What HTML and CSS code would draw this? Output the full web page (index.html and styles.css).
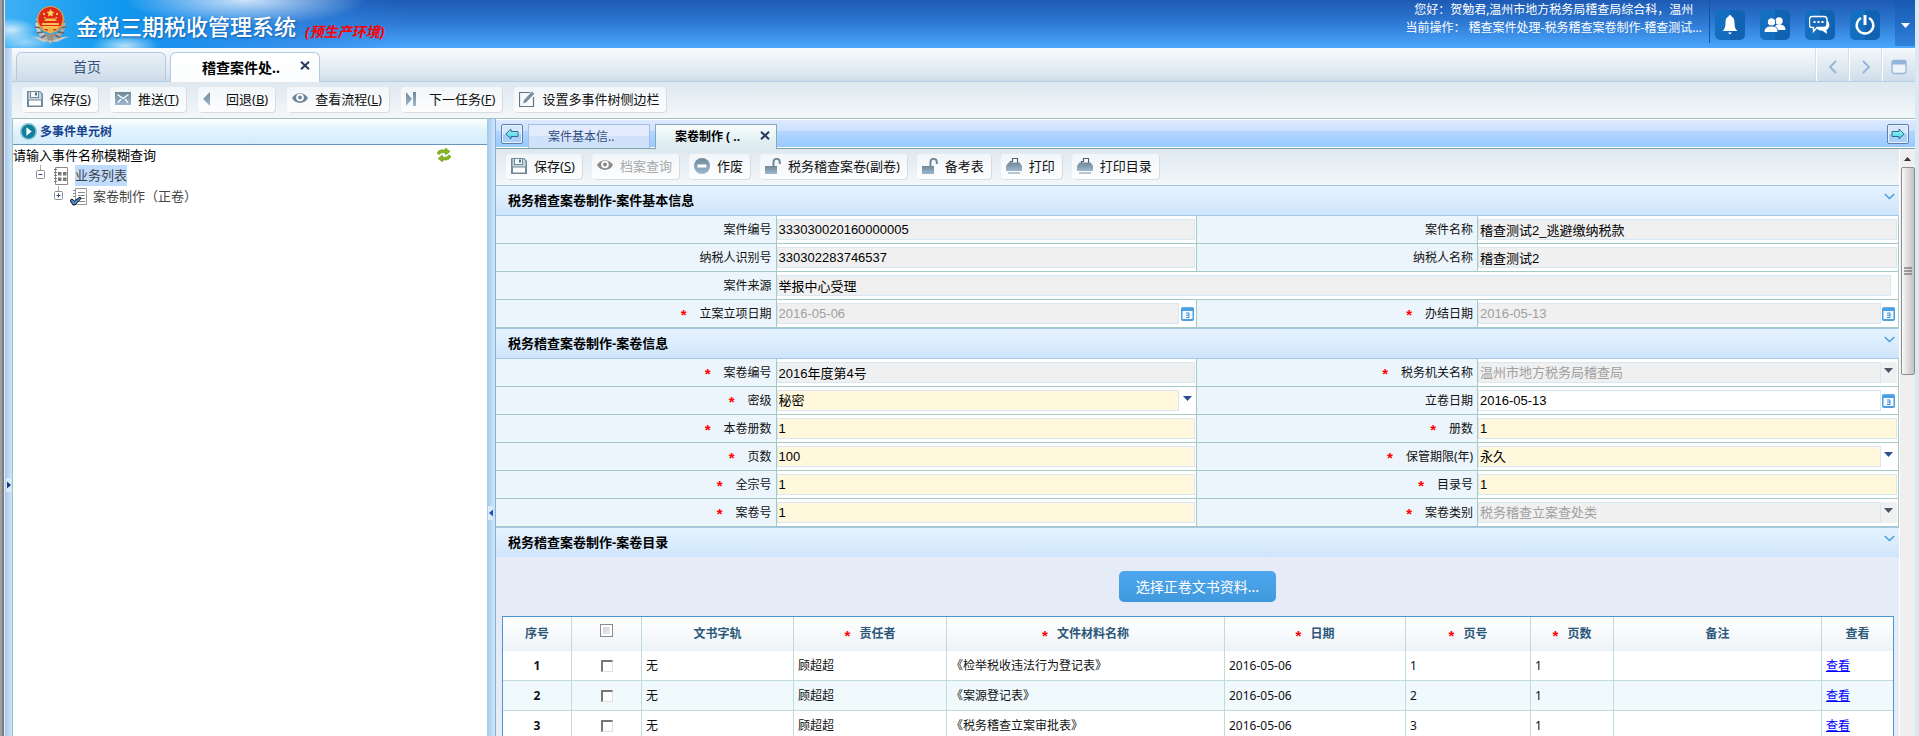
FILE: index.html
```html
<!DOCTYPE html>
<html lang="zh-CN">
<head>
<meta charset="utf-8">
<title>金税三期税收管理系统</title>
<link rel="stylesheet" href="styles.css">
</head>
<body>
<svg class="defs" aria-hidden="true">
  <defs>
    <linearGradient id="steel" x1="0" y1="0" x2="0" y2="1"><stop offset="0" stop-color="#6f8798"/><stop offset="1" stop-color="#9db9cf"/></linearGradient>
    <linearGradient id="teal" x1="0" y1="0" x2="0" y2="1"><stop offset="0" stop-color="#a6f4f6"/><stop offset="1" stop-color="#3fd3e6"/></linearGradient>
    <linearGradient id="silver" x1="0" y1="0" x2="1" y2="1"><stop offset="0" stop-color="#e9e5dc"/><stop offset="1" stop-color="#8d8b88"/></linearGradient>
    <symbol id="i-save" viewBox="0 0 16 16"><path d="M0 0h13l3 3v13H0z" fill="#71899a"/><path d="M2 1h1v6h9V1h.5L14.500 3v5.500h-13V1z" fill="#c8d6e0"/><path d="M4 1h7v5H4z" fill="#f4f8fa"/><path d="M8 1.500h2v3H8z" fill="#566d7e"/><path d="M2 9.500h12v5H2z" fill="#fff"/></symbol>
    <symbol id="i-mail" viewBox="0 0 16 16"><path d="M0 1h16v13H0z" fill="url(#steel)"/><path d="M2.500 3.500 8 7.500l5.500-4M3 11.500l3-3.200M13 11.500l-3-3.200" fill="none" stroke="#fff" stroke-width="1.300"/></symbol>
    <symbol id="i-back" viewBox="0 0 16 16"><path d="M7 1v14L0 8z" fill="url(#steel)"/></symbol>
    <symbol id="i-eye" viewBox="0 0 16 16"><path d="M0 7C3.500.5 12.500.5 16 7c-3.500 6.500-12.500 6.500-16 0z" fill="currentColor"/><circle cx="8" cy="6.500" r="3.800" fill="#fff"/><circle cx="8" cy="6.500" r="2" fill="currentColor"/></symbol>
    <symbol id="i-next" viewBox="0 0 16 16"><path d="M0 1v14l6-7z" fill="url(#steel)"/><path d="M7 1h3v14H7z" fill="url(#steel)"/></symbol>
    <symbol id="i-edit" viewBox="0 0 16 16"><path d="M14.500 6v9.500H.5V1.500H11" fill="none" stroke="#5f7688" stroke-width="1.200"/><path d="M4 12.500 5 9l8-8.500 2.300 2.200-8 8.500z" fill="#7b8f9d"/></symbol>
    <symbol id="i-minus" viewBox="0 0 16 16"><circle cx="8" cy="8" r="8" fill="url(#steel)"/><path d="M3.500 6.500h9v3h-9z" fill="#fff"/></symbol>
    <symbol id="i-lock" viewBox="0 0 16 16"><path d="M0 8h12v8H0z" fill="url(#steel)"/><path d="M8.500 8V3.500A3.200 3.200 0 0 1 14.800 3.500V6" fill="none" stroke="#6f8798" stroke-width="2"/></symbol>
    <symbol id="i-print" viewBox="0 0 16 16"><path d="M4.500 6V3.500h2v-3h5V6" fill="#fff" stroke="#4c6070" stroke-width="1.200"/><path d="M2.500 4.500h11L16 8v5H0V8z" fill="url(#steel)"/><path d="M2 15h12" stroke="#7b8f9d"/></symbol>
    <symbol id="i-left" viewBox="0 0 14 12"><path d="M.8 6 6 1v2.500h7v5H6V11z" fill="url(#teal)" stroke="#2c6f96"/></symbol>
    <symbol id="i-right" viewBox="0 0 14 12"><path d="M13.200 6 8 1v2.500H1v5h7V11z" fill="url(#teal)" stroke="#2c6f96"/></symbol>
    <symbol id="i-cal" viewBox="0 0 13 15"><path d="M0 3a2 2 0 0 1 2-2h9a2 2 0 0 1 2 2v10a2 2 0 0 1-2 2H2a2 2 0 0 1-2-2z" fill="#4b9fe0"/><path d="M1.500 5h10v8h-10z" fill="#f4faff"/><path d="M1.500 1h10" stroke="#cfe6f8" stroke-dasharray="1 1"/><path d="M5 7h3v4.500H5M5 9.200h3" fill="none" stroke="#3f8ccc"/></symbol>
    <symbol id="i-down" viewBox="0 0 9 5"><path d="M0 0h9L4.500 5z" fill="currentColor"/></symbol>
    <symbol id="i-chev" viewBox="0 0 11 7"><path d="m.7 1 4.800 4.500L10.300 1" fill="none" stroke="#4a9edd" stroke-width="1.500"/></symbol>
    <symbol id="i-x" viewBox="0 0 10 9"><path d="m1 .8 8 7.400M9 .8 1 8.200" stroke="#25395f" stroke-width="2"/></symbol>
  </defs>
</svg>
<div class="frame">
  <div class="edge edge-left"></div>
  <div class="app">
    <header class="top">
      <svg class="emblem" viewBox="0 0 37 40" aria-hidden="true">
        <path d="M5 13C1 22 6 33 17 37l1.500 2 1.500-2c11-4 16-15 12-24l-4 14-9.500 4L9 27z" fill="url(#silver)"/>
        <path d="M4 16l4 3M3 22l6 1M5 28l6-1M9 33l5-3M33 16l-4 3M34 22l-6 1M32 28l-6-1M28 33l-5-3" stroke="#6f625c" stroke-width="1.500"/>
        <path d="M0 32c5-1 9 1 14 3l4 3 4-3c5-2 9-4 15-3-5 1-9 4-13 5l-6-1-6 1C8 36 5 33 0 32z" fill="#c9c5bf"/>
        <circle cx="18.500" cy="14.500" r="13.500" fill="#d8a24a"/>
        <circle cx="18.500" cy="14" r="12" fill="#e0281a"/>
        <path d="m18.500 4 1.200 2.600 2.800.3-2.100 1.900.6 2.800-2.500-1.400-2.500 1.400.6-2.800-2.100-1.900 2.800-.3z" fill="#ffd75a"/>
        <path d="M11 8h2v2h-2zM24 8h2v2h-2zM12 12h1.500v1.500H12zM23.500 12H25v1.500h-1.500zM12 16h13l-2-2.500h-9zM10 18h17v2H10zM9 21h19l-3 3H12z" fill="#f8c24a"/>
        <circle cx="18.500" cy="25.500" r="3" fill="#e9b24a"/>
        <path d="M14 29h9l-2 6h-5z" fill="#96908a"/>
      </svg>
      <h1 class="brand">金税三期税收管理系统</h1>
      <span class="env">(预生产环境)</span>
      <div class="user">
        <p>您好：贺勉君,温州市地方税务局稽查局综合科，温州</p>
        <p>当前操作： 稽查案件处理-税务稽查案卷制作-稽查测试...</p>
      </div>
      <nav class="quick">
        <button class="qbtn" aria-label="消息"><svg viewBox="0 0 20 20"><path d="M10 0a1.500 1.500 0 0 1 1.500 1.500C14 2.500 14.500 5 14.500 8c0 4 1 6.500 3 8h-15c2-1.500 3-4 3-8 0-3 .5-5.500 3-6.500A1.500 1.500 0 0 1 10 0zM8 17.500h4l-2 2z" fill="#fff"/></svg></button>
        <button class="qbtn" aria-label="联系人"><svg viewBox="0 0 22 20"><circle cx="15" cy="6" r="3.700" fill="#fff"/><path d="M10 15c0-4 2-5.500 5-5.500s6.500 1 6.500 5.500z" fill="#fff"/><circle cx="7.500" cy="7" r="4.200" fill="#fff" stroke="#1769b8"/><path d="M0 17.500c0-5 3-6.500 7.500-6.500s6.500 2 6.500 6.500z" fill="#fff" stroke="#1769b8"/></svg></button>
        <button class="qbtn" aria-label="会话"><svg viewBox="0 0 22 20"><path d="M18 5.500c3 1 3.500 7.500-.5 9.500l.5 4-4.500-3.300C11 16 9 15 8 13.500" fill="#fff"/><path d="M3 1.500h12c2 0 3 1 3 3v5c0 2-1 3-3 3H8l-3.500 4V12.500H3c-2 0-2.500-1-2.500-3v-5c0-2 .5-3 2.500-3z" fill="#1769b8" stroke="#fff" stroke-width="1.400"/><path d="M4.500 7h2M8.500 7h2M12.500 7h2" stroke="#fff" stroke-width="1.800"/></svg></button>
        <button class="qbtn" aria-label="退出"><svg viewBox="0 0 20 20"><path d="M6 3a8.300 8.300 0 1 0 8 0" fill="none" stroke="#fff" stroke-width="2.400"/><path d="M10 0v10" stroke="#fff" stroke-width="3"/></svg></button>
      </nav>
      <button class="more" aria-label="更多"><svg class="tri" aria-hidden="true"><use href="#i-down"/></svg></button>
    </header>

    <div class="workspace">
      <div class="rail"><span class="grip grip-rail"><svg viewBox="0 0 5 9"><path d="M0 0v9l5-4.500z" fill="#123a7a"/></svg></span></div>
      <div class="stage">
        <div class="tabs">
          <button class="tab tab-home">首页</button>
          <button class="tab tab-on"><span>稽查案件处..</span><svg class="x"><use href="#i-x"/></svg></button>
          <div class="tabnav">
            <button aria-label="向左"><svg viewBox="0 0 16 16"><path d="M11 2 5 8l6 6" fill="none" stroke="#94b4d8" stroke-width="1.800"/></svg></button>
            <button aria-label="向右"><svg viewBox="0 0 16 16"><path d="m5 2 6 6-6 6" fill="none" stroke="#94b4d8" stroke-width="1.800"/></svg></button>
            <button aria-label="窗口"><svg viewBox="0 0 16 16"><rect x="1" y="1.500" width="14" height="13" rx="2" fill="#edf3f8" stroke="#94b4d8" stroke-width="1.300"/><path d="M1 2h14v3.500H1z" fill="#94b4d8"/></svg></button>
          </div>
        </div>
        <div class="tools">
          <button class="tool"><svg class="ic"><use href="#i-save"/></svg><span>保存(<u>S</u>)</span></button>
          <button class="tool"><svg class="ic"><use href="#i-mail"/></svg><span>推送(<u>T</u>)</span></button>
          <button class="tool"><svg class="ic"><use href="#i-back"/></svg><span>回退(<u>B</u>)</span></button>
          <button class="tool"><svg class="ic ic-eye"><use href="#i-eye"/></svg><span>查看流程(<u>L</u>)</span></button>
          <button class="tool"><svg class="ic"><use href="#i-next"/></svg><span>下一任务(<u>F</u>)</span></button>
          <button class="tool"><svg class="ic"><use href="#i-edit"/></svg><span>设置多事件树侧边栏</span></button>
        </div>

        <div class="split">
          <aside class="side">
            <h2 class="side-head"><svg viewBox="0 0 16 16"><circle cx="8" cy="8" r="8" fill="#8fc3d6"/><circle cx="8" cy="8" r="6.500" fill="#107f9d"/><path d="M6 4v8l5-4z" fill="#fff"/></svg>多事件单元树</h2>
            <div class="search"><span>请输入事件名称模糊查询</span>
              <button class="refresh" aria-label="刷新"><svg viewBox="0 0 14 14"><path d="M0 5.500C1 2 4 1.500 8.500 2V0L13 3.500 8.500 7V5C5 4.500 3 5 2.500 6.500zM14 8c-1 3.500-4 4.500-8.500 4v2L1 10.500 5.500 7v2c3.500.5 5 0 6-2z" fill="#86b81c" stroke="#5d8a0c" stroke-width=".5"/></svg></button>
            </div>
            <ul class="tree">
              <li class="node"><svg class="exp" viewBox="0 0 10 15"><path d="M4.500 0v6" stroke="#a8a8a8"/><rect x=".5" y="5.500" width="8" height="8" rx="1" fill="#fff" stroke="#8f8f8f"/><path d="M2.500 9.500h4" stroke="#2a4a80"/></svg><svg class="leaf" viewBox="0 0 18 18"><path d="M3.500.5h12v17h-12z" fill="#fff" stroke="#888"/><path d="M2 2.500h3M2 5.500h3M2 8.500h3M2 11.500h3M2 14.500h3" stroke="#777"/><path d="M6 5h3.500v3.500H6zM11 5h3.500v3.500H11zM6 10.500h3.500V14H6zM11 10.500h3.500V14H11z" fill="#777"/></svg><span class="name name-on">业务列表</span></li>
              <li class="node node-sub"><svg class="exp" viewBox="0 0 10 15"><path d="M4.500 0v6" stroke="#a8a8a8"/><rect x=".5" y="5.500" width="8" height="8" rx="1" fill="#fff" stroke="#8f8f8f"/><path d="M2.500 9.500h4M4.500 7.500v4" stroke="#2a4a80"/></svg><svg class="leaf" viewBox="0 0 18 18"><path d="M5.500.5h11v16h-11z" fill="#fff" stroke="#999"/><path d="M3 2.500h3M3 5.500h3M3 8.500h3M8 4.500h7M8 7.500h7M8 10.500h7M8 13.500h7" stroke="#888"/><path d="M0 12.500 2 11l2.500 2L10 9l1 1.500L5 17H3z" fill="#4d87cc" stroke="#000" stroke-width=".9"/></svg><span class="name">案卷制作（正卷）</span></li>
            </ul>
          </aside>
          <div class="bar"><span class="grip grip-bar"><svg viewBox="0 0 5 9"><path d="M5 0v9L0 4.500z" fill="#1a56b8"/></svg></span></div>

          <main class="work">
            <div class="subtabs">
              <button class="arrow" aria-label="向左滚动"><svg><use href="#i-left"/></svg></button>
              <button class="subtab">案件基本信..</button>
              <button class="subtab subtab-on"><span>案卷制作 ( ..</span><svg class="x"><use href="#i-x"/></svg></button>
              <button class="arrow arrow-end" aria-label="向右滚动"><svg><use href="#i-right"/></svg></button>
            </div>
            <div class="pane">
              <div class="content">
                <div class="tools tools-in">
                  <button class="tool"><svg class="ic"><use href="#i-save"/></svg><span>保存(<u>S</u>)</span></button>
                  <button class="tool" disabled><svg class="ic ic-gray"><use href="#i-eye"/></svg><span>档案查询</span></button>
                  <button class="tool"><svg class="ic"><use href="#i-minus"/></svg><span>作废</span></button>
                  <button class="tool"><svg class="ic"><use href="#i-lock"/></svg><span>税务稽查案卷(副卷)</span></button>
                  <button class="tool"><svg class="ic"><use href="#i-lock"/></svg><span>备考表</span></button>
                  <button class="tool"><svg class="ic"><use href="#i-print"/></svg><span>打印</span></button>
                  <button class="tool"><svg class="ic"><use href="#i-print"/></svg><span>打印目录</span></button>
                </div>

                <h3 class="sec">税务稽查案卷制作-案件基本信息<svg class="chev"><use href="#i-chev"/></svg></h3>
                <div class="form">
                  <label for="f1">案件编号</label><div class="cell"><input id="f1" class="ro" value="333030020160000005" readonly></div>
                  <label for="f2">案件名称</label><div class="cell"><input id="f2" class="ro" value="稽查测试2_逃避缴纳税款" readonly></div>
                  <label for="f3">纳税人识别号</label><div class="cell"><input id="f3" class="ro" value="330302283746537" readonly></div>
                  <label for="f4">纳税人名称</label><div class="cell"><input id="f4" class="ro" value="稽查测试2" readonly></div>
                  <label for="f5">案件来源</label><div class="cell wide"><input id="f5" class="ro" value="举报中心受理" readonly></div>
                  <label for="f6"><i>*</i>立案立项日期</label><div class="cell"><input id="f6" class="ro" value="2016-05-06" disabled><button class="pick" aria-label="选择日期"><svg class="cal"><use href="#i-cal"/></svg></button></div>
                  <label for="f7"><i>*</i>办结日期</label><div class="cell"><input id="f7" class="ro" value="2016-05-13" disabled><button class="pick" aria-label="选择日期"><svg class="cal"><use href="#i-cal"/></svg></button></div>
                </div>

                <h3 class="sec">税务稽查案卷制作-案卷信息<svg class="chev"><use href="#i-chev"/></svg></h3>
                <div class="form">
                  <label for="g1"><i>*</i>案卷编号</label><div class="cell"><input id="g1" class="ro" value="2016年度第4号" readonly></div>
                  <label for="g2"><i>*</i>税务机关名称</label><div class="cell"><select id="g2" class="ro" disabled><option>温州市地方税务局稽查局</option></select><span class="pick pick-off"><svg class="tri"><use href="#i-down"/></svg></span></div>
                  <label for="g3"><i>*</i>密级</label><div class="cell"><select id="g3" class="req"><option>秘密</option></select><span class="pick"><svg class="tri"><use href="#i-down"/></svg></span></div>
                  <label for="g4">立卷日期</label><div class="cell"><input id="g4" value="2016-05-13"><button class="pick" aria-label="选择日期"><svg class="cal"><use href="#i-cal"/></svg></button></div>
                  <label for="g5"><i>*</i>本卷册数</label><div class="cell"><input id="g5" class="req" value="1"></div>
                  <label for="g6"><i>*</i>册数</label><div class="cell"><input id="g6" class="req" value="1"></div>
                  <label for="g7"><i>*</i>页数</label><div class="cell"><input id="g7" class="req" value="100"></div>
                  <label for="g8"><i>*</i>保管期限(年)</label><div class="cell"><select id="g8" class="req"><option>永久</option></select><span class="pick"><svg class="tri"><use href="#i-down"/></svg></span></div>
                  <label for="g9"><i>*</i>全宗号</label><div class="cell"><input id="g9" class="req" value="1"></div>
                  <label for="g10"><i>*</i>目录号</label><div class="cell"><input id="g10" class="req" value="1"></div>
                  <label for="g11"><i>*</i>案卷号</label><div class="cell"><input id="g11" class="req" value="1"></div>
                  <label for="g12"><i>*</i>案卷类别</label><div class="cell"><select id="g12" class="ro" disabled><option>税务稽查立案查处类</option></select><span class="pick pick-off"><svg class="tri"><use href="#i-down"/></svg></span></div>
                </div>

                <h3 class="sec sec-last">税务稽查案卷制作-案卷目录<svg class="chev"><use href="#i-chev"/></svg></h3>
                <div class="list">
                  <button class="choose">选择正卷文书资料...</button>
                  <table class="grid">
                    <colgroup><col class="c1"><col class="c2"><col class="c3"><col class="c4"><col class="c5"><col class="c6"><col class="c7"><col class="c8"><col class="c9"><col class="c10"></colgroup>
                    <thead><tr><th>序号</th><th><input type="checkbox" class="all" aria-label="全选"></th><th>文书字轨</th><th><i>*</i>责任者</th><th><i>*</i>文件材料名称</th><th><i>*</i>日期</th><th><i>*</i>页号</th><th><i>*</i>页数</th><th>备注</th><th>查看</th></tr></thead>
                    <tbody>
                      <tr><td class="no">1</td><td class="ck"><input type="checkbox" aria-label="选择第1行"></td><td>无</td><td>顾超超</td><td>《检举税收违法行为登记表》</td><td>2016-05-06</td><td>1</td><td>1</td><td></td><td><a href="#">查看</a></td></tr>
                      <tr><td class="no">2</td><td class="ck"><input type="checkbox" aria-label="选择第2行"></td><td>无</td><td>顾超超</td><td>《案源登记表》</td><td>2016-05-06</td><td>2</td><td>1</td><td></td><td><a href="#">查看</a></td></tr>
                      <tr><td class="no">3</td><td class="ck"><input type="checkbox" aria-label="选择第3行"></td><td>无</td><td>顾超超</td><td>《税务稽查立案审批表》</td><td>2016-05-06</td><td>3</td><td>1</td><td></td><td><a href="#">查看</a></td></tr>
                    </tbody>
                  </table>
                </div>
              </div>
              <div class="scroll" aria-hidden="true">
                <svg class="up" viewBox="0 0 7 4"><path d="M0 4h7L3.500 0z" fill="#333"/></svg>
                <div class="thumb"><svg viewBox="0 0 8 8"><path d="M0 1h8M0 4h8M0 7h8" stroke="#555"/></svg></div>
              </div>
            </div>
          </main>
        </div>
      </div>
    </div>
  </div>
  <div class="edge edge-right"></div>
</div>
</body>
</html>
```
FILE: styles.css
```css
* { box-sizing: border-box; }
html, body { height: 100%; }
body {
  margin: 0;
  overflow: hidden;
  font: 12px/16px "Noto Sans", "Noto Sans CJK SC", sans-serif;
  color: #111;
  background: #fff;
}
h1, h2, h3, p, ul { margin: 0; padding: 0; }
button { font: inherit; color: inherit; padding: 0; margin: 0; border: 0; background: none; }
svg { display: block; flex: none; }
i { font-style: normal; }
.defs { position: absolute; width: 0; height: 0; }

.frame { display: flex; height: 100vh; }
.edge-left { width: 5px; background: linear-gradient(90deg, #a0a0a0 0 2px, #7b7f84 2px 4px, #dfe9f3 4px); }
.edge-right { width: 4px; background: #dbe9f6; }
.app { flex: 1; min-width: 0; display: flex; flex-direction: column; }

/* header */
.top {
  display: flex;
  align-items: flex-start;
  height: 48px;
  flex: none;
  padding-left: 27px;
  color: #fff;
  background:
    radial-gradient(ellipse 26px 12px at 6px 30px, rgba(255,255,255,.75), transparent),
    radial-gradient(ellipse 30px 10px at 20px 42px, rgba(255,255,255,.5), transparent),
    radial-gradient(ellipse 34px 12px at 120px 46px, rgba(255,255,255,.7), transparent),
    radial-gradient(ellipse 120px 26px at 240px 0, rgba(235,245,255,.85), transparent),
    linear-gradient(90deg, #3db0f4 0, #0f98ee 110px, rgba(30,140,235,.9) 200px, rgba(40,130,225,.5) 300px, transparent 400px),
    linear-gradient(#1d5ab3, #2f7bd5 50%, #4ba7fd);
}
.emblem { width: 37px; height: 40px; margin-top: 5px; }
.brand {
  margin-left: 7px;
  font-size: 22px;
  line-height: 32px;
  padding-top: 10px;
  font-weight: 500;
  text-shadow: 1px 1px 2px #1a5fa8;
  white-space: nowrap;
}
.env { margin-left: 9px; padding-top: 23px; font-size: 14px; line-height: 18px; font-weight: 700; font-style: italic; color: #f00; white-space: nowrap; }
.user { margin-left: auto; padding-top: 1px; text-align: center; line-height: 18px; padding-right: 7px; white-space: nowrap; }
.quick { display: flex; gap: 15px; height: 43px; padding: 10px 15px 0 5px; border-left: 1px solid #1552a0; }
.qbtn { width: 30px; height: 30px; border-radius: 5px; display: grid; place-items: center; background: linear-gradient(90deg, #146fc0 50%, #1162b0 50%); }
.qbtn svg { width: 22px; height: 20px; }
.more { width: 20px; height: 46px; display: grid; place-items: center; padding-top: 5px; background: rgba(20,90,180,.45); }
.tri { width: 9px; height: 5px; }

.workspace { flex: 1; min-height: 0; display: flex; }
.rail { position: relative; width: 7px; background: linear-gradient(90deg, #a9c8ea, #cfe3f7); }
.stage { flex: 1; min-width: 0; display: flex; flex-direction: column; }
.grip { position: absolute; left: 1px; width: 5px; height: 14px; display: grid; place-items: center; background: #dcebfa; }
.grip svg { width: 4px; height: 8px; }
.grip-rail { top: 430px; }
.grip-bar { top: 387px; }

/* page tabs */
.tabs {
  display: flex;
  align-items: flex-end;
  gap: 4px;
  height: 34px;
  flex: none;
  padding-left: 4px;
  background: linear-gradient(#f8fbfd, #dce6ee 80%, #cddce8);
  border-bottom: 1px solid #b4cfe6;
}
.tab {
  width: 150px;
  height: 29px;
  border: 1px solid #b3cbe2;
  border-bottom: 0;
  border-radius: 6px 6px 0 0;
  background: linear-gradient(#eaf1f6, #cddbe8);
  color: #35517d;
  font-size: 14px;
}
.tab-home { padding-right: 8px; }
.tab-on { display: flex; align-items: center; padding-left: 31px; color: #000; font-weight: 700; background: linear-gradient(#fff, #fafcfd); height: 30px; margin-bottom: -1px; }
.tab-on .x { margin-left: 20px; margin-bottom: 4px; }
.x { width: 10px; height: 9px; }
.tabnav { display: flex; margin-left: auto; height: 33px; }
.tabnav button { width: 33px; display: grid; place-items: center; padding-top: 4px; border-left: 1px solid #fff; background: linear-gradient(#f4f8fb, #cfddea); box-shadow: -1px 0 #d3e0ea; }
.tabnav svg { width: 16px; height: 16px; }

/* toolbars */
.tools { display: flex; align-items: center; gap: 12px; height: 36px; flex: none; padding: 0 0 2px 10px; background: linear-gradient(#dee8ef, #f3f7fa); }
.tools-in { gap: 10px; }
.tool {
  display: flex;
  align-items: center;
  gap: 7px;
  height: 25px;
  padding: 0 7px 0 5px;
  font-size: 13px;
  white-space: nowrap;
  border: 0;
  border-radius: 4px;
  background: linear-gradient(#f1f6f9, #fdfdfe);
  box-shadow: 1px 1px 0 #d6dce0;
}
.tool:disabled { color: #aaa; }
.ic { width: 16px; height: 16px; }
.ic-eye { color: #6d8598; }
.ic-gray { color: #8a8a8a; }

.split { flex: 1; min-height: 0; display: flex; border-top: 1px solid #9fbfc0; }
.side { width: 475px; flex: none; border-left: 1px solid #9cc7b8; background: #fff; font-size: 13px; }
.side-head { display: flex; align-items: center; gap: 3px; height: 26px; padding-left: 7px; font-size: 12px; font-weight: 700; color: #17408f; background: linear-gradient(#fff, #e3f4fd 40%, #d3ecfb); border-bottom: 1px solid #6795bd; }
.side-head svg { width: 17px; height: 17px; }
.search { display: flex; justify-content: space-between; align-items: center; height: 20px; padding-right: 36px; color: #000; }
.refresh svg { width: 14px; height: 14px; }
.tree { list-style: none; color: #444; }
.node { display: flex; align-items: center; height: 21px; padding-left: 23px; }
.node-sub { padding-left: 41px; }
.exp { width: 10px; height: 15px; margin-bottom: 6px; }
.leaf { width: 18px; height: 18px; margin: 0 5px 0 6px; }
.name { line-height: 21px; }
.name-on { background: #bfdcff; }
.bar { position: relative; width: 9px; flex: none; background: linear-gradient(90deg, #a3c8ec, #c3ddf6 70%, #d4e7f9); border-right: 1px solid #84afdc; }

/* inner tabs */
.work { flex: 1; min-width: 0; display: flex; flex-direction: column; }
.subtabs {
  display: flex;
  align-items: flex-start;
  height: 30px;
  flex: none;
  padding: 5px 6px 0 5px;
  background: linear-gradient(#fff 0 1px, #deeaff 1px, #cce0fe 12px, #b4d6ff 12px, #98caff 28px, #fff 28px);
  border-bottom: 1px solid #7fa3ae;
}
.arrow { width: 22px; height: 20px; display: grid; place-items: center; border: 1px solid #5f7fae; border-radius: 2px; background: linear-gradient(#d6e7fb 50%, #a9cff8 50%); box-shadow: inset 0 0 0 1px #e6f1fd; }
.arrow svg { width: 14px; height: 12px; }
.arrow-end { margin-left: auto; }
.subtab { width: 122px; height: 24px; margin-left: 5px; padding-left: 19px; text-align: left; border: 1px solid #a3bfe3; border-bottom: 0; color: #34507e; background: linear-gradient(#e2ecfd 50%, #d0e2fa 50%); }
.subtab-on { display: flex; align-items: center; height: 25px; color: #000; font-weight: 700; border-color: #86aab4; background: linear-gradient(#fafdfe, #e6f3f5 50%, #dce9ee); }
.subtab-on .x { margin: 0 6px 4px auto; }

.pane { flex: 1; min-height: 0; display: flex; }
.content { flex: 1; min-width: 0; overflow: hidden; background: #e5ecf8; }
.scroll { width: 16px; flex: none; border-left: 1px solid #fff; background: #efefef; display: flex; flex-direction: column; align-items: center; }
.up { width: 7px; height: 4px; margin: 8px 0 6px; }
.thumb { width: 14px; height: 208px; display: grid; place-items: center; border: 1px solid #8f8f8f; border-radius: 2px; background: linear-gradient(90deg, #fafafa, #dcdcdc 50%, #c2c2c2); }
.thumb svg { width: 8px; height: 8px; }

/* sections */
.sec { display: flex; justify-content: space-between; align-items: center; height: 31px; padding: 0 4px 1px 12px; font-size: 13px; font-weight: 700; color: #000; background: linear-gradient(#e6f3ff, #cfe5fb); border: solid #a5c6e6; border-width: 1px 0; }
.sec-last { height: 30px; border-bottom: 0; }
.chev { width: 11px; height: 7px; margin-bottom: 7px; }

.form { display: grid; grid-template-columns: 20% 30% 20% 30%; }
.form label, .cell { height: 28px; border: solid #a5c9c3; border-width: 0 1px 1px 0; }
.form label { display: flex; align-items: center; justify-content: flex-end; padding-right: 4px; background: #ecf5fc; color: #111; }
.form label i, th i { padding-top: 3px; font: 700 15px/12px "Liberation Sans", Arial, sans-serif; color: #f00; }
.form label i { margin-right: 13px; }
.cell { display: flex; align-items: center; background: #fff; padding-right: 1px; }
.wide { grid-column: span 3; padding-right: 7px; }
.cell input, .cell select {
  flex: 1;
  min-width: 0;
  height: 21px;
  margin: 0;
  padding: 0 1px;
  border: 1px solid #d8e7f1;
  border-radius: 0;
  background: #fff;
  font: 13px/19px "Liberation Sans", Arial, "Noto Sans CJK SC", sans-serif;
  color: #000;
  outline: 0;
}
.cell select { appearance: none; padding-bottom: 3px; opacity: 1; }
.cell .ro { background: #f0f0f0; }
.cell .req { background: #fff8dc; }
.cell input:disabled, .cell select:disabled { color: #a0a0a0; }
.pick { width: 16px; height: 21px; display: grid; place-items: center; color: #2b4f91; }
.pick .tri { margin-bottom: 4px; }
.pick-off { background: #f0f0f0; color: #4b5563; }
.cal { width: 13px; height: 15px; }

/* document list */
.list { padding: 14px 6px 0; }
.choose { display: block; height: 31px; margin: 0 auto 14px; padding: 0 17px; font-size: 14px; color: #fff; border-radius: 5px; background: linear-gradient(#4ea6ee, #4098dd); }
.grid { width: 100%; table-layout: fixed; border-collapse: separate; border-spacing: 0; border: 1px solid #4599db; background: #fff; }
.grid th { height: 34px; padding: 0; color: #2b5878; background: linear-gradient(#fff, #eef3f7); border-right: 1px solid #c1dbd5; vertical-align: middle; }
.grid td { height: 30px; padding: 0 4px; border: solid #c1dbd5; border-width: 0 1px 1px 0; white-space: nowrap; }
.grid th:last-child, .grid td:last-child { border-right: 0; }
.grid tbody tr:nth-child(even) { background: #f0fafd; }
.grid th i { display: inline-block; margin-right: 9px; vertical-align: middle; }
.grid .no, .grid .ck { text-align: center; }
.grid .no { font-weight: 700; }
.grid a { color: #00f; }
.grid input { appearance: none; display: block; width: 12px; height: 12px; margin: 0 auto; border: solid #777; border-width: 2px 1px 1px 2px; border-right-color: #e0e0e0; border-bottom-color: #e0e0e0; background: #fff; }
.grid .all { width: 13px; height: 13px; margin-bottom: 8px; border: 1px solid #8a8a8a; box-shadow: inset 0 0 0 2px #fff; background: linear-gradient(135deg, #c8ccd2, #f3f3f3); }
.c1 { width: 69px; } .c2 { width: 70px; } .c3 { width: 152px; } .c4 { width: 153px; } .c5 { width: 278px; }
.c6 { width: 181px; } .c7 { width: 125px; } .c8 { width: 83px; } .c9 { width: 208px; } .c10 { width: 71px; }
```
